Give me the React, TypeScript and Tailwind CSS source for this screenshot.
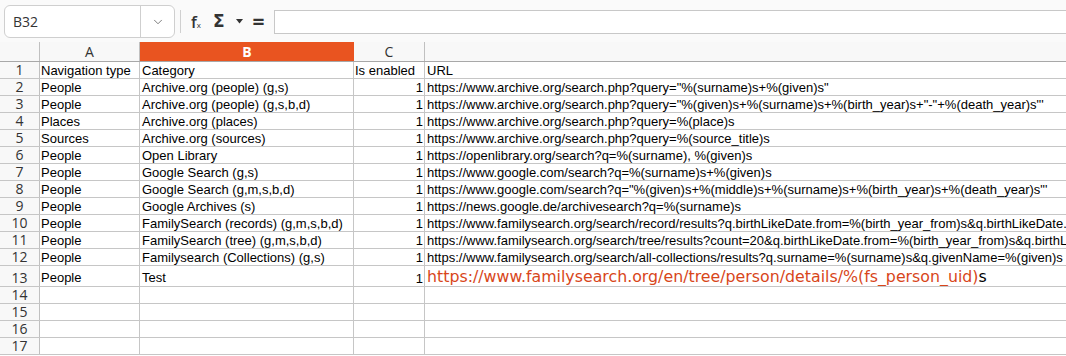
import { ChevronDown } from 'lucide-react';

const rows: { n: number; a: string; b: string; c: string; d: string; big?: boolean }[] = [
  { n: 1, a: 'Navigation type', b: 'Category', c: 'Is enabled', d: 'URL' },
  { n: 2, a: 'People', b: 'Archive.org (people) (g,s)', c: '1', d: 'https://www.archive.org/search.php?query="%(surname)s+%(given)s"' },
  { n: 3, a: 'People', b: 'Archive.org (people) (g,s,b,d)', c: '1', d: 'https://www.archive.org/search.php?query="%(given)s+%(surname)s+%(birth_year)s+"-"+%(death_year)s"\'' },
  { n: 4, a: 'Places', b: 'Archive.org (places)', c: '1', d: 'https://www.archive.org/search.php?query=%(place)s' },
  { n: 5, a: 'Sources', b: 'Archive.org (sources)', c: '1', d: 'https://www.archive.org/search.php?query=%(source_title)s' },
  { n: 6, a: 'People', b: 'Open Library', c: '1', d: 'https://openlibrary.org/search?q=%(surname), %(given)s' },
  { n: 7, a: 'People', b: 'Google Search (g,s)', c: '1', d: 'https://www.google.com/search?q=%(surname)s+%(given)s' },
  { n: 8, a: 'People', b: 'Google Search (g,m,s,b,d)', c: '1', d: 'https://www.google.com/search?q="%(given)s+%(middle)s+%(surname)s+%(birth_year)s+%(death_year)s"\'' },
  { n: 9, a: 'People', b: 'Google Archives (s)', c: '1', d: 'https://news.google.de/archivesearch?q=%(surname)s' },
  { n: 10, a: 'People', b: 'FamilySearch (records) (g,m,s,b,d)', c: '1', d: 'https://www.familysearch.org/search/record/results?q.birthLikeDate.from=%(birth_year_from)s&q.birthLikeDate.to=%(birth_year_to)s' },
  { n: 11, a: 'People', b: 'FamilySearch (tree) (g,m,s,b,d)', c: '1', d: 'https://www.familysearch.org/search/tree/results?count=20&q.birthLikeDate.from=%(birth_year_from)s&q.birthLikeDate.to=%(birth_year_to)s' },
  { n: 12, a: 'People', b: 'Familysearch (Collections) (g,s)', c: '1', d: 'https://www.familysearch.org/search/all-collections/results?q.surname=%(surname)s&q.givenName=%(given)s' },
  { n: 13, a: 'People', b: 'Test', c: '1', d: '', big: true },
];

const empty = [14, 15, 16, 17];

function RowHead({ n }: { n: number }) {
  return (
    <div className="w-[40px] shrink-0 border-r border-[#c0c0c0] bg-[#f8f8f8] flex items-end justify-center text-[14px] leading-[16px] text-[#333] font-['Open_Sans',sans-serif]">
      {n}
    </div>
  );
}

export default function App() {
  return (
    <div className="w-[1066px] h-[356px] overflow-hidden bg-white font-['Liberation_Sans',Arial,sans-serif] text-[13px] text-black">
      {/* formula bar */}
      <div className="h-[42px] bg-[#fafafa] flex items-start">
        <div className="ml-[4px] mt-[5px] w-[171px] h-[33px] rounded-[6px] border border-[#cfcfcf] bg-white flex">
          <div className="flex-1 flex items-center pl-[8px] text-[14px] text-[#333] font-['Open_Sans',sans-serif]">B32</div>
          <div className="w-[34px] border-l border-[#cfcfcf] flex items-center justify-center text-[#555]">
            <ChevronDown size={14} strokeWidth={1.3} />
          </div>
        </div>
        <div className="ml-[5px] mt-[10px] w-px h-[23px] bg-[#d0d0d0]" />
        <div className="mt-[10px] h-[23px] flex items-center text-[#333] font-['Open_Sans',sans-serif]">
          <span className="ml-[10px] text-[16px] font-semibold leading-none">f<span className="text-[8px] font-normal">x</span></span>
          <span className="ml-[12px] text-[17px] font-bold leading-none font-['DejaVu_Sans',sans-serif]">Σ</span>
          <svg className="ml-[11px]" width="7" height="5" viewBox="0 0 7 5"><path d="M0 0h7L3.5 4.5z" fill="#333" /></svg>
          <span className="ml-[10px] text-[21px] font-bold leading-none">=</span>
        </div>
        <div className="ml-[9px] mt-[10px] flex-1 h-[24px] border border-[#c8c8c8] border-r-0 bg-white" />
      </div>

      {/* column headers */}
      <div className="h-[20px] flex border-b border-[#a8a8a8] bg-[#f8f8f8] text-[14px] text-[#333] font-['Open_Sans',sans-serif]">
        <div className="w-[40px] shrink-0 border-r border-[#c0c0c0]" />
        <div className="w-[100px] shrink-0 border-r border-[#c0c0c0] flex items-center justify-center leading-none">A</div>
        <div className="w-[214px] shrink-0 bg-[#e95420] flex items-center justify-center leading-none text-white font-bold">B</div>
        <div className="w-[71px] shrink-0 border-r border-[#c0c0c0] flex items-center justify-center leading-none">C</div>
        <div className="flex-1" />
      </div>

      {/* rows */}
      {rows.map((r) => (
        <div key={r.n} className={`flex border-b border-[#c6c6c6] ${r.big ? 'h-[21px]' : 'h-[17px]'}`}>
          <RowHead n={r.n} />
          <div className={`w-[100px] shrink-0 border-r border-[#c6c6c6] pl-[1px] flex whitespace-nowrap leading-[15px] ${r.big ? 'items-start pt-[4px]' : 'items-end'}`}>{r.a}</div>
          <div className={`w-[214px] shrink-0 border-r border-[#c6c6c6] pl-[2px] flex whitespace-nowrap leading-[15px] ${r.big ? 'items-start pt-[4px]' : 'items-end'}`}>{r.b}</div>
          <div className={`w-[71px] shrink-0 border-r border-[#c6c6c6] flex items-end leading-[15px] ${r.n === 1 ? 'justify-start pl-[1px]' : 'justify-end pr-[1px]'}`}>{r.c}</div>
          <div className="flex-1 min-w-0 overflow-hidden whitespace-nowrap pl-[2px] flex items-end leading-[15px]">
            {r.big ? (
              <span className="font-['DejaVu_Sans',sans-serif] text-[15.8px] leading-[19px]">
                <span className="text-[#d8461a]">https://www.familysearch.org/en/tree/person/details/%(fs_person_uid)</span>s
              </span>
            ) : (
              r.d
            )}
          </div>
        </div>
      ))}
      {empty.map((n) => (
        <div key={n} className="flex h-[17px] border-b border-[#c6c6c6]">
          <RowHead n={n} />
          <div className="w-[100px] shrink-0 border-r border-[#c6c6c6]" />
          <div className="w-[214px] shrink-0 border-r border-[#c6c6c6]" />
          <div className="w-[71px] shrink-0 border-r border-[#c6c6c6]" />
          <div className="flex-1" />
        </div>
      ))}
    </div>
  );
}
